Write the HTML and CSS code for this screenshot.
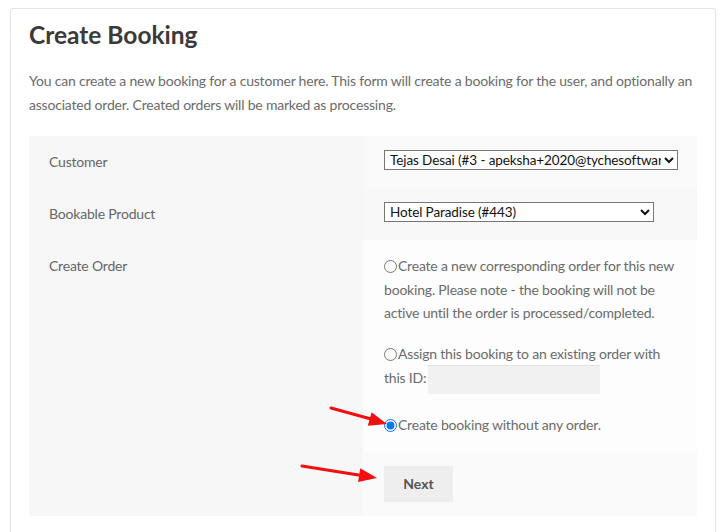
FILE: index.html
```html
<!DOCTYPE html>
<html lang="en">
<head>
<meta charset="utf-8">
<title>Create Booking</title>
<link rel="stylesheet" href="styles.css">
</head>
<body>
<div class="card">
  <h1 class="title">Create Booking</h1>
  <p class="intro">You can create a new booking for a customer here. This form will create a booking for the user, and optionally an associated order. Created orders will be marked as processing.</p>
  <table class="form-table">
    <tr class="row row-1">
      <th>Customer</th>
      <td>
        <select class="select select-customer">
          <option>Tejas Desai (#3 - apeksha+2020@tychesoftware.com)</option>
        </select>
      </td>
    </tr>
    <tr class="row row-2">
      <th>Bookable Product</th>
      <td>
        <select class="select select-product">
          <option>Hotel Paradise (#443)</option>
        </select>
      </td>
    </tr>
    <tr class="row row-3">
      <th>Create Order</th>
      <td>
        <p class="option"><label><input type="radio" name="order" class="radio">Create a new corresponding order for this new booking. Please note - the booking will not be active until the order is processed/completed.</label></p>
        <p class="option option-id"><label><input type="radio" name="order" class="radio">Assign this booking to an existing order with this ID:</label> <input type="text" class="order-id"></p>
        <p class="option"><label><input type="radio" name="order" class="radio" checked>Create booking without any order.</label></p>
      </td>
    </tr>
    <tr class="row row-4">
      <th></th>
      <td><button type="button" class="btn-next">Next</button></td>
    </tr>
  </table>
</div>
<svg class="arrows" width="725" height="532" viewBox="0 0 725 532">
  <line x1="331" y1="408" x2="371" y2="419" stroke="#f20f0f" stroke-width="3" stroke-linecap="round"/>
  <polygon points="387,424 371.6,412.3 367.8,425.7" fill="#f20f0f"/>
  <line x1="302" y1="466" x2="360" y2="475.3" stroke="#f20f0f" stroke-width="3" stroke-linecap="round"/>
  <polygon points="377,478 360.3,468.3 358.1,482.1" fill="#f20f0f"/>
</svg>
</body>
</html>
```
FILE: styles.css
```css
html, body {
  margin: 0;
  padding: 0;
  background: #ffffff;
}
body {
  position: relative;
  width: 725px;
  height: 532px;
  overflow: hidden;
  font-family: "Lato", "Open Sans", sans-serif;
  color: #6b6b6b;
}
.card {
  margin: 8px 0 0 10px;
  width: 706px;
  height: 540px;
  box-sizing: border-box;
  border: 1px solid #e4e4e4;
  border-radius: 3px;
  box-shadow: 0 0 2px rgba(0, 0, 0, 0.04);
  padding: 11px 19px 0 18px;
  background: #fff;
}
.title {
  margin: 0 0 19px 0;
  font-size: 24.5px;
  line-height: 30px;
  font-weight: 700;
  color: #3a3a3a;
}
.intro {
  margin: 0 0 20px 0;
  font-size: 14px;
  letter-spacing: -0.2px;
  line-height: 23.5px;
  color: #6b6b6b;
}
.form-table {
  width: 668px;
  border-collapse: collapse;
  table-layout: fixed;
  font-size: 14px;
  letter-spacing: -0.2px;
  line-height: 23.5px;
}
.form-table th {
  width: 334px;
  box-sizing: border-box;
  text-align: left;
  vertical-align: top;
  font-weight: 400;
  color: #666;
  background: #f7f7f7;
  padding: 14px 20px;
}
.form-table td {
  vertical-align: top;
  padding: 14px 20px 14px 21px;
}
.row-1 td { background: #f9f9f9; }
.row-2 td { background: #f8f8f8; }
.row-3 td { background: #fdfdfd; padding-bottom: 15px; }
.row-4 td { background: #fafafa; }
.select {
  display: block;
  height: 20px;
  margin: 0 0 4px 0;
  padding: 0 0 0 1px;
  border: 1px solid #767676;
  border-radius: 0;
  background: #fff;
  color: #111;
  font-family: "Lato", sans-serif;
  font-size: 13.5px;
  letter-spacing: -0.1px;
}
.select-customer { width: 294px; }
.select-product { width: 270px; }
.option {
  margin: 0 0 17px 0;
}
.option-id {
  margin-bottom: 19px;
}
.option:last-child {
  margin-bottom: 0;
}
.radio {
  width: 13px;
  height: 13px;
  margin: 0 1px 0 0;
  vertical-align: -2px;
}
.order-id {
  width: 172px;
  height: 29px;
  box-sizing: border-box;
  border: none;
  box-shadow: inset 0 1px 0 #e0e0e0;
  background: #f1f1f1;
  vertical-align: middle;
  margin: 0 0 0 -2px;
}
.btn-next {
  display: block;
  width: 69px;
  height: 36px;
  border: none;
  background: #eeeeee;
  color: #555;
  font-family: "Lato", sans-serif;
  font-weight: 700;
  font-size: 14px;
  padding: 0;
  cursor: pointer;
}
.arrows {
  position: absolute;
  left: 0;
  top: 0;
  pointer-events: none;
}
```
